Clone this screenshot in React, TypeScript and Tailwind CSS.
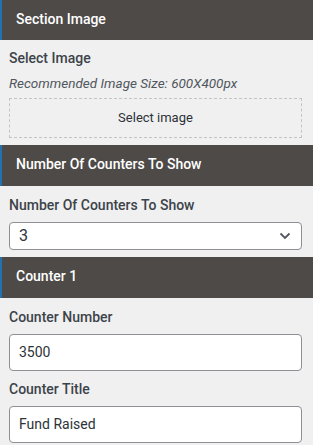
const Header = ({ title, h }: { title: string; h: string }) => (
  <div
    className={`flex items-center border-l-2 border-[#2271b1] bg-[#4e4a48] pb-[2px] pl-[14px] text-[14px] font-medium text-white ${h}`}
  >
    {title}
  </div>
);

const Label = ({ text, className = "" }: { text: string; className?: string }) => (
  <p className={`text-[14px] font-medium leading-[20px] text-[#3c434a] ${className}`}>{text}</p>
);

export default function App() {
  return (
    <div className="min-h-[445px] w-[313px] bg-[#f0f0f0] font-['Roboto',sans-serif]">
      <Header title="Section Image" h="h-[40px]" />
      <div className="pb-[7px] pl-[9px] pr-[11px] pt-[8px]">
        <Label text="Select Image" />
        <p className="mt-[6px] text-[13.5px] italic leading-[18px] text-[#50575e]">
          Recommended Image Size: 600X400px
        </p>
        <div className="mt-[6px] flex h-[40px] items-center justify-center border border-dashed border-[#c3c4c7] text-[13px] text-[#2c3338]">
          Select image
        </div>
      </div>

      <Header title="Number Of Counters To Show" h="h-[41px]" />
      <div className="pb-[7px] pl-[9px] pr-[11px] pt-[9px]">
        <Label text="Number Of Counters To Show" />
        <div className="mt-[7px] flex h-[28px] items-center justify-between rounded-[4px] border border-[#8c8f94] bg-white pl-[9px] pr-[10px] text-[16px] text-[#2c3338]">
          <span>3</span>
          <svg width="12" height="8" viewBox="0 0 12 8" fill="none">
            <path d="M1.5 1.5 6 6l4.5-4.5" stroke="#50575e" strokeWidth="1.8" />
          </svg>
        </div>
      </div>

      <Header title="Counter 1" h="h-[41px]" />
      <div className="pl-[9px] pr-[11px] pt-[9px]">
        <Label text="Counter Number" />
        <div className="mt-[7px] flex h-[37px] items-center rounded-[4px] border border-[#8c8f94] bg-white pl-[9px] text-[14px] text-[#2c3338]">
          3500
        </div>
        <Label text="Counter Title" className="mt-[8px]" />
        <div className="mt-[7px] flex h-[37px] items-center rounded-[4px] border border-[#8c8f94] bg-white pl-[9px] text-[14px] text-[#2c3338]">
          Fund Raised
        </div>
      </div>
    </div>
  );
}
